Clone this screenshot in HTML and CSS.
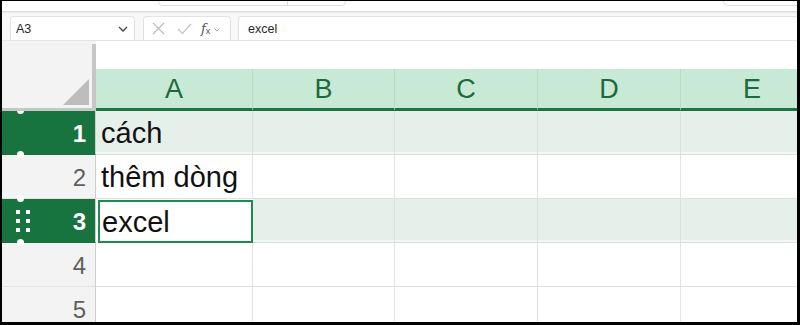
FILE: index.html
```html
<!DOCTYPE html>
<html>
<head>
<meta charset="utf-8">
<link rel="stylesheet" href="styles.css">
</head>
<body>
<div class="frame">
  <div class="topstrip">
    <div class="tabgroup"><span class="seg1"></span><span class="seg2"></span></div>
    <div class="tabright"></div>
  </div>
  <div class="fbar">
    <div class="namebox">
      <span>A3</span>
      <svg class="chev" width="10" height="6" viewBox="0 0 10 6"><path d="M1 1 L5 5 L9 1" fill="none" stroke="#444" stroke-width="1.3"/></svg>
    </div>
    <div class="fxbox">
      <svg width="13" height="13" viewBox="0 0 13 13"><path d="M1 1 L12 12 M12 1 L1 12" stroke="#bdbdbd" stroke-width="1.2"/></svg>
      <svg width="15" height="12" viewBox="0 0 15 12"><path d="M1 6 L5.5 10.5 L14 1" fill="none" stroke="#c4c4c4" stroke-width="1.2"/></svg>
      <span class="fx">f<sub>x</sub></span>
      <svg class="minichev" width="6" height="4" viewBox="0 0 6 4"><path d="M0.5 0.5 L3 3 L5.5 0.5" fill="none" stroke="#999" stroke-width="0.9"/></svg>
    </div>
    <div class="finput">excel</div>
  </div>
  <div class="sheet">
    <div class="corner"><div class="corner-in"><span class="tri"></span></div></div>
    <div class="colhead">A</div>
    <div class="colhead">B</div>
    <div class="colhead">C</div>
    <div class="colhead">D</div>
    <div class="colhead">E</div>

    <div class="rowhead sel"><span class="dot top"></span>1<span class="dot bottom"></span></div>
    <div class="cell sel">cách</div>
    <div class="cell sel"></div>
    <div class="cell sel"></div>
    <div class="cell sel"></div>
    <div class="cell sel"></div>

    <div class="rowhead">2</div>
    <div class="cell">thêm dòng</div>
    <div class="cell"></div>
    <div class="cell"></div>
    <div class="cell"></div>
    <div class="cell"></div>

    <div class="rowhead sel"><span class="dot top"></span><span class="grip"><i></i><i></i><i></i><i></i><i></i><i></i></span>3<span class="dot bottom"></span></div>
    <div class="cell sel active">excel</div>
    <div class="cell sel"></div>
    <div class="cell sel"></div>
    <div class="cell sel"></div>
    <div class="cell sel"></div>

    <div class="rowhead">4</div>
    <div class="cell"></div>
    <div class="cell"></div>
    <div class="cell"></div>
    <div class="cell"></div>
    <div class="cell"></div>

    <div class="rowhead">5</div>
    <div class="cell"></div>
    <div class="cell"></div>
    <div class="cell"></div>
    <div class="cell"></div>
    <div class="cell"></div>
  </div>
</div>
</body>
</html>
```

FILE: styles.css
```css
* { box-sizing: border-box; }
html, body { margin: 0; padding: 0; background: #fff; }
body { font-family: "Liberation Sans", Arial, sans-serif; }

.frame {
  width: 800px;
  height: 325px;
  border-style: solid;
  border-color: #000;
  border-width: 1px 3px 3px 2px;
  overflow: hidden;
  background: #f3f3f3;
  display: flex;
  flex-direction: column;
}

.topstrip {
  height: 11px;
  flex: none;
  background: #fff;
  border-bottom: 1px solid #dadada;
  display: flex;
  align-items: flex-start;
  box-shadow: 0 1px 1px #ececec;
  position: relative;
  z-index: 1;
}
.tabgroup {
  margin-left: 156px;
  width: 188px;
  height: 5px;
  border: 1px solid #dcdcdc;
  border-top: none;
  border-radius: 0 0 5px 5px;
  display: flex;
}
.seg1 { width: 129px; border-right: 1px solid #dcdcdc; }
.tabright {
  margin-left: auto;
  width: 74px;
  height: 5px;
  border: 1px solid #dcdcdc;
  border-top: none;
  border-right: none;
  border-radius: 0 0 0 5px;
}

.fbar {
  height: 29px;
  flex: none;
  background: #f8f8f8;
  display: flex;
  align-items: flex-end;
  padding-left: 8px;
  border-bottom: 1px solid #e4e4e4;
}
.namebox, .fxbox, .finput {
  height: 24px;
  background: #fff;
  border: 1px solid #e2e2e2;
  border-bottom: none;
  border-radius: 4px 4px 0 0;
  display: flex;
  align-items: center;
  font-size: 12.5px;
  color: #262626;
}
.namebox {
  width: 125px;
  padding: 0 6px 0 5px;
  justify-content: space-between;
}
.chev { margin-top: 1px; }
.fxbox {
  width: 88px;
  margin-left: 8px;
  padding-left: 8px;
  gap: 0;
}
.fxbox svg:nth-child(2) { margin-left: 12px; }
.fx {
  margin-left: 9px;
  font-family: "DejaVu Serif", serif;
  font-style: italic;
  font-size: 13px;
  color: #555;
}
.fx sub { font-size: 9px; font-style: normal; font-family: "Liberation Sans", sans-serif; vertical-align: -1px; }
.minichev { margin-left: 4px; margin-top: 2px; }
.finput {
  flex: 1;
  margin-left: 7px;
  padding-left: 9px;
  border-right: none;
  border-radius: 4px 0 0 0;
}

.sheet {
  flex: 1;
  display: grid;
  grid-template-columns: 94px 157px 142px 143px 143px 143px;
  grid-template-rows: 70px repeat(5, 44px);
  background: #fff;
  position: relative;
}

.corner {
  background: #f3f3f3;
  padding-top: 3px;
  position: relative;
  z-index: 2;
}
.corner-in {
  height: 100%;
  border-right: 4px solid #c6c6c6;
  border-bottom: 3px solid #c6c6c6;
  position: relative;
}
.tri {
  position: absolute;
  right: 3px;
  bottom: 3px;
  width: 26px;
  height: 26px;
  background: #bdbdbd;
  clip-path: polygon(100% 0, 100% 100%, 0 100%);
}

.colhead {
  align-self: end;
  height: 42px;
  background: #c8e9d5;
  border-right: 1px solid #b3dcc3;
  border-bottom: 3px solid #1a7541;
  color: #1c6b3d;
  font-size: 27px;
  display: flex;
  align-items: center;
  justify-content: center;
  padding-top: 2px;
}

.rowhead {
  background: #f3f3f3;
  color: #5f5f5f;
  font-size: 24px;
  display: flex;
  align-items: center;
  justify-content: flex-end;
  padding-right: 9px;
  padding-top: 2px;
  border-right: 1px solid #cfcfcf;
  border-bottom: 1px solid #e0e0e0;
  position: relative;
}
.rowhead.sel {
  background: #18743f;
  color: #fff;
  font-weight: bold;
  border-bottom-color: #18743f;
}
.dot {
  position: absolute;
  left: 15px;
  width: 7px;
  height: 7px;
  border-radius: 50%;
  background: #fff;
}
.dot.top { top: -4px; }
.dot.bottom { bottom: -4px; z-index: 1; }
.grip {
  position: absolute;
  left: 14px;
  top: 11px;
  display: grid;
  grid-template-columns: 4px 4px;
  column-gap: 6px;
  row-gap: 5px;
}
.grip i { display: block; width: 4px; height: 4px; background: #fff; }

.cell {
  border-right: 1px solid #e3e3e3;
  border-bottom: 1px solid #e0e0e0;
  font-size: 29px;
  color: #111;
  display: flex;
  align-items: center;
  padding-left: 5px;
  padding-top: 2px;
  white-space: nowrap;
}
.cell.sel {
  background: #e5f0ea;
  border-right-color: #d5e1da;
  border-bottom-color: #d8e0db;
  box-shadow: inset 0 -2px 0 #f4f8f5;
}
.cell.active {
  border: 2px solid #1f8a4f;
  margin: 1px 0 0 2px;
  padding-left: 2px;
  box-shadow: none;
  background: #fff;
}
```
